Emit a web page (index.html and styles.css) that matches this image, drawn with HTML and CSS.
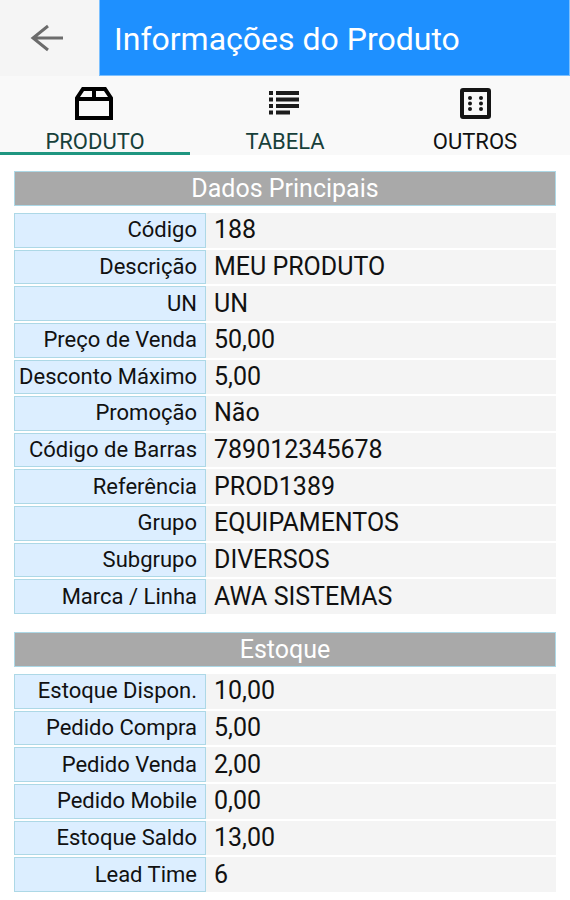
FILE: index.html
```html
<!DOCTYPE html>
<html lang="pt-BR">
<head>
  <meta charset="utf-8">
  <meta name="viewport" content="width=device-width, initial-scale=1">
  <title>Informações do Produto</title>
  <link rel="stylesheet" href="styles.css">
</head>
<body>
  <header class="topbar">
    <button class="back" type="button" aria-label="Voltar">
      <svg width="34" height="28" viewBox="0 0 34 28" fill="none" stroke="#6c6c6c" stroke-width="3">
        <path d="M33 14H3M18 2L3 14L18 26"/>
      </svg>
    </button>
    <h1 class="title">Informações do Produto</h1>
  </header>

  <nav class="tabs">
    <a class="tab tab-active" href="#produto" aria-current="page">
      <svg class="tab-icon" width="40" height="36" viewBox="0 0 40 36" fill="none" stroke="#000" stroke-width="4">
        <path d="M2 12L8 3H30L36 12V32H2ZM2 13H36M19 3V13"/>
      </svg>
      <span>PRODUTO</span>
    </a>
    <a class="tab tab-visited" href="#tabela">
      <svg class="tab-icon" width="40" height="36" viewBox="0 0 40 36" fill="#1c1c1c">
        <path d="M4 5h4v4H4zM11 5h23v4H11zM4 11.500h4v4H4zM11 11.500h23v4H11zM4 18h4v4H4zM11 18h23v4H11zM4 24.500h4v4H4zM11 24.500h14v4H11z"/>
      </svg>
      <span>TABELA</span>
    </a>
    <a class="tab" href="#outros">
      <svg class="tab-icon" width="40" height="36" viewBox="0 0 40 36">
        <rect x="7" y="4" width="27" height="27" rx="1" fill="none" stroke="#151515" stroke-width="4"/>
        <g fill="#151515">
          <circle cx="15" cy="12" r="2"/><circle cx="26" cy="12" r="2"/>
          <circle cx="15" cy="17.500" r="2"/><circle cx="26" cy="17.500" r="2"/>
          <circle cx="15" cy="23" r="2"/><circle cx="26" cy="23" r="2"/>
        </g>
      </svg>
      <span>OUTROS</span>
    </a>
  </nav>

  <main class="content" id="produto">
    <section class="group">
      <h2 class="group-title">Dados Principais</h2>
      <table class="fields fields-main">
        <tr><th scope="row">Código</th><td>188</td></tr>
        <tr><th scope="row">Descrição</th><td>MEU PRODUTO</td></tr>
        <tr><th scope="row">UN</th><td>UN</td></tr>
        <tr><th scope="row">Preço de Venda</th><td>50,00</td></tr>
        <tr><th scope="row">Desconto Máximo</th><td>5,00</td></tr>
        <tr><th scope="row">Promoção</th><td>Não</td></tr>
        <tr><th scope="row">Código de Barras</th><td>789012345678</td></tr>
        <tr><th scope="row">Referência</th><td>PROD1389</td></tr>
        <tr><th scope="row">Grupo</th><td>EQUIPAMENTOS</td></tr>
        <tr><th scope="row">Subgrupo</th><td>DIVERSOS</td></tr>
        <tr><th scope="row">Marca / Linha</th><td>AWA SISTEMAS</td></tr>
      </table>
    </section>

    <section class="group">
      <h2 class="group-title">Estoque</h2>
      <table class="fields fields-stock">
        <tr><th scope="row">Estoque Dispon.</th><td>10,00</td></tr>
        <tr><th scope="row">Pedido Compra</th><td>5,00</td></tr>
        <tr><th scope="row">Pedido Venda</th><td>2,00</td></tr>
        <tr><th scope="row">Pedido Mobile</th><td>0,00</td></tr>
        <tr><th scope="row">Estoque Saldo</th><td>13,00</td></tr>
        <tr><th scope="row">Lead Time</th><td>6</td></tr>
      </table>
    </section>
  </main>
</body>
</html>
```
FILE: styles.css
```css
* {
  box-sizing: border-box;
}

body {
  margin: 0;
  background: #fff;
  color: #111;
  font-family: Roboto, "Liberation Sans", sans-serif;
}

.topbar {
  display: flex;
  height: 76px;
  background: #f5f5f5;
}

.back {
  display: flex;
  align-items: center;
  justify-content: center;
  width: 99px;
  padding: 0 6px 0 0;
  border: 0;
  background: transparent;
}

.title {
  flex: 1;
  margin: 0;
  padding: 4px 14px 0;
  border: 1px solid #7cc0ff;
  border-top: 0;
  background: #1e90ff;
  color: #fff;
  font-size: 32px;
  font-weight: 400;
  line-height: 70px;
}

.tabs {
  display: grid;
  grid-template-columns: repeat(3, 1fr);
  background: #f9f9f9;
}

.tab {
  display: flex;
  flex-direction: column;
  gap: 10px;
  align-items: center;
  padding-top: 10px;
  border-bottom: 3px solid transparent;
  color: #111;
  font-size: 22px;
  line-height: 20px;
  text-decoration: none;
}

.tab-icon {
  display: block;
}

.tab-visited {
  color: #17403a;
}

.tab-active {
  border-bottom-color: #1f9680;
  color: #17403a;
}

.content {
  padding: 16px 14px 0;
}

.group {
  margin-bottom: 16px;
}

.group-title {
  margin: 0 0 5px;
  border: 1px solid #add8e6;
  background: #a9a9a9;
  color: #fff;
  font-size: 25px;
  font-weight: 400;
  line-height: 33px;
  text-align: center;
}

.fields {
  width: 100%;
  border-spacing: 0 2px;
  table-layout: fixed;
}

/* The rows share the table's height evenly. */
.fields-main {
  height: 405px;
}

.fields-stock {
  height: 222px;
}

.fields th {
  width: 192px;
  padding: 0 8px 0 0;
  border: 1px solid #add8e6;
  background: #dceeff;
  font-size: 22px;
  font-weight: 400;
  line-height: 30px;
  text-align: right;
  white-space: nowrap;
}

.fields td {
  padding: 0 8px;
  background: #f4f4f4;
  font-size: 25px;
  line-height: 30px;
}
```
